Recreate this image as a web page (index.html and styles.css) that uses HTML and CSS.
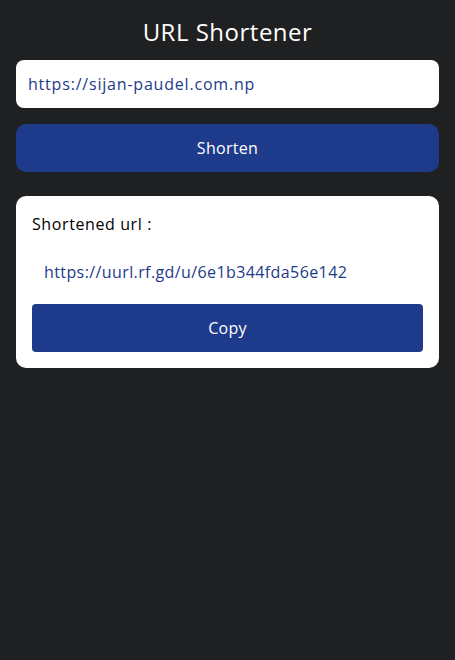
FILE: index.html
```html
<!DOCTYPE html>
<html lang="en">
<head>
<meta charset="utf-8">
<title>URL Shortener</title>
<link rel="stylesheet" href="styles.css">
</head>
<body>
<main class="app">
  <h1 class="title">URL Shortener</h1>
  <div class="url-input">https://sijan-paudel.com.np</div>
  <button class="btn btn-shorten">Shorten</button>
  <section class="result">
    <div class="result-label">Shortened url :</div>
    <div class="result-url">https://uurl.rf.gd/u/6e1b344fda56e142</div>
    <button class="btn btn-copy">Copy</button>
  </section>
</main>
</body>
</html>
```

FILE: styles.css
```css
* { box-sizing: border-box; }
html, body {
  margin: 0;
  padding: 0;
  background: #1f2022;
  height: 100%;
}
body {
  font-family: "Open Sans", "Noto Sans", sans-serif;
  letter-spacing: 0.6px;
}
.app {
  display: flex;
  flex-direction: column;
  padding: 14px 16px 16px;
}
.title {
  margin: 0 0 10px;
  font-size: 24px;
  line-height: 36px;
  font-weight: 500;
  letter-spacing: 0.5px;
  color: #ffffff;
  text-align: center;
}
.url-input {
  height: 48px;
  background: #ffffff;
  border-radius: 8px;
  padding: 0 12px;
  display: flex;
  align-items: center;
  font-size: 16px;
  letter-spacing: 0.8px;
  color: #1e3a8a;
}
.btn {
  display: block;
  width: 100%;
  height: 48px;
  border: none;
  background: #1e3a8a;
  color: #ffffff;
  font-family: inherit;
  font-size: 16px;
  letter-spacing: 0.3px;
  cursor: pointer;
}
.btn-shorten {
  margin-top: 16px;
  border-radius: 10px;
}
.result {
  margin-top: 24px;
  background: #ffffff;
  border-radius: 10px;
  padding: 16px;
  display: flex;
  flex-direction: column;
}
.result-label {
  font-size: 16px;
  line-height: 24px;
  font-weight: 500;
  color: #000000;
}
.result-url {
  margin-top: 12px;
  padding: 0 12px;
  line-height: 24px;
  height: 48px;
  display: flex;
  align-items: center;
  font-size: 16px;
  letter-spacing: 0.4px;
  color: #1e3a8a;
}
.btn-copy {
  margin-top: 8px;
  border-radius: 4px;
}
```
